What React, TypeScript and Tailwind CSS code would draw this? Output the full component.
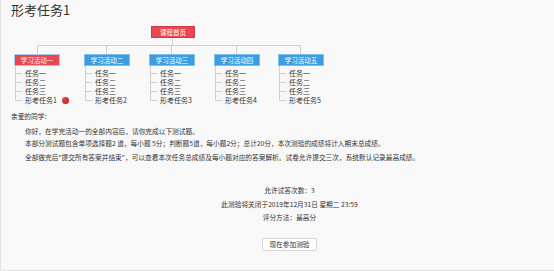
import { FC } from "react";

const activities = [
  { name: "学习活动一", active: true, last: "形考任务1", gap: "ml-[13px]" },
  { name: "学习活动二", active: false, last: "形考任务2", gap: "ml-[24px]" },
  { name: "学习活动三", active: false, last: "形考任务3", gap: "ml-[19px]" },
  { name: "学习活动四", active: false, last: "形考任务4", gap: "ml-[19px]" },
  { name: "学习活动五", active: false, last: "形考任务5", gap: "ml-[18px]" },
];

const TreeLines: FC = () => (
  <svg width="11" height="36" className="shrink-0">
    <line x1="1.5" y1="0" x2="1.5" y2="34.5" stroke="#cfcfcf" strokeWidth="1" />
    <line x1="1.5" y1="7.5" x2="8" y2="7.5" stroke="#cfcfcf" strokeWidth="1" />
    <line x1="1.5" y1="16.5" x2="8" y2="16.5" stroke="#cfcfcf" strokeWidth="1" />
    <line x1="1.5" y1="25.5" x2="8" y2="25.5" stroke="#cfcfcf" strokeWidth="1" />
    <line x1="1.5" y1="34.5" x2="8" y2="34.5" stroke="#cfcfcf" strokeWidth="1" />
  </svg>
);

const Activity: FC<{ name: string; active: boolean; last: string; gap: string }> = ({
  name,
  active,
  last,
  gap,
}) => (
  <div className={`flex flex-col w-[46px] shrink-0 ${gap}`}>
    <div
      className={
        active
          ? "w-[46px] h-[12px] flex items-center justify-center bg-[#e9474f] border border-[#a8cdea] text-white text-[6.5px] leading-none"
          : "w-[46px] h-[12px] flex items-center justify-center bg-[#3d9de2] border border-[#7fbdea] text-white text-[6.5px] leading-none"
      }
    >
      {name}
    </div>
    <div className="flex">
      <TreeLines />
      <div className="flex flex-col pt-[3px] text-[7px] leading-[9px] text-[#333]">
        <span className="whitespace-nowrap">任务一</span>
        <span className="whitespace-nowrap">任务二</span>
        <span className="whitespace-nowrap">任务三</span>
        <span className="flex items-center gap-[5px] whitespace-nowrap">
          {last}
          {active && (
            <span className="inline-block w-[7px] h-[7px] rounded-full bg-[radial-gradient(circle_at_35%_35%,#e8474a,#b3191d)]" />
          )}
        </span>
      </div>
    </div>
  </div>
);

const App: FC = () => {
  return (
    <div
      className="w-[554px] h-[271px] bg-[#f8f8f8] border-l border-b border-[#e4e4e4] overflow-hidden text-[#333] [text-size-adjust:none] [-webkit-text-size-adjust:none]"
      style={{ fontFamily: '"Noto Sans CJK SC", "Noto Sans", sans-serif' }}
    >
      <h1 className="pl-[10px] pt-[1px] text-[13px] leading-[18px] text-[#333]">形考任务1</h1>

      <div className="mt-[7px] ml-[150px] w-[44px] h-[12px] flex items-center justify-center bg-[#e9474f] border border-[#d5363f] text-white text-[6.5px] leading-none">
        课程首页
      </div>

      <svg width="320" height="16" className="block">
        <line x1="171.5" y1="0" x2="171.5" y2="7.5" stroke="#cfcfcf" strokeWidth="1" />
        <line x1="36" y1="7.5" x2="300" y2="7.5" stroke="#cfcfcf" strokeWidth="1" />
        <line x1="36.5" y1="7.5" x2="36.5" y2="16" stroke="#cfcfcf" strokeWidth="1" />
        <line x1="105.5" y1="7.5" x2="105.5" y2="16" stroke="#cfcfcf" strokeWidth="1" />
        <line x1="170.5" y1="7.5" x2="170.5" y2="16" stroke="#cfcfcf" strokeWidth="1" />
        <line x1="235.5" y1="7.5" x2="235.5" y2="16" stroke="#cfcfcf" strokeWidth="1" />
        <line x1="299.5" y1="7.5" x2="299.5" y2="16" stroke="#cfcfcf" strokeWidth="1" />
      </svg>

      <div className="flex">
        {activities.map((a) => (
          <Activity key={a.name} {...a} />
        ))}
      </div>

      <div className="mt-[5px] text-[6.7px] leading-[12px] text-[#333]">
        <p className="pl-[10px] whitespace-nowrap">亲爱的同学:</p>
        <p className="pl-[24px] mt-[3px] whitespace-nowrap">你好，在学完活动一的全部内容后，请你完成以下测试题。</p>
        <p className="pl-[24px] whitespace-nowrap">
          本部分测试题包含单项选择题2 道，每小题 5分；判断题5道，每小题2分；总计20分，本次测验的成绩将计入期末总成绩。
        </p>
        <p className="pl-[24px] mt-[2px] whitespace-nowrap">
          全部做完后"提交所有答案并结束"，可以查看本次任务总成绩及每小题对应的答案解析。试卷允许提交三次，系统默认记录最高成绩。
        </p>
      </div>

      <div className="mt-[21px] pl-[24px] flex flex-col items-center text-[6.7px] leading-[12px] text-[#333]">
        <p>允许试答次数：3</p>
        <p className="mt-[1.5px]">此测验将关闭于2019年12月31日 星期二 23:59</p>
        <p className="mt-[1.5px]">评分方法：最高分</p>
        <button className="mt-[15px] w-[55px] h-[13px] flex items-center justify-center bg-white border border-[#d6d6d6] rounded-[2px] text-[6.7px] leading-none text-[#333]">
          现在参加测验
        </button>
      </div>
    </div>
  );
};

export default App;
